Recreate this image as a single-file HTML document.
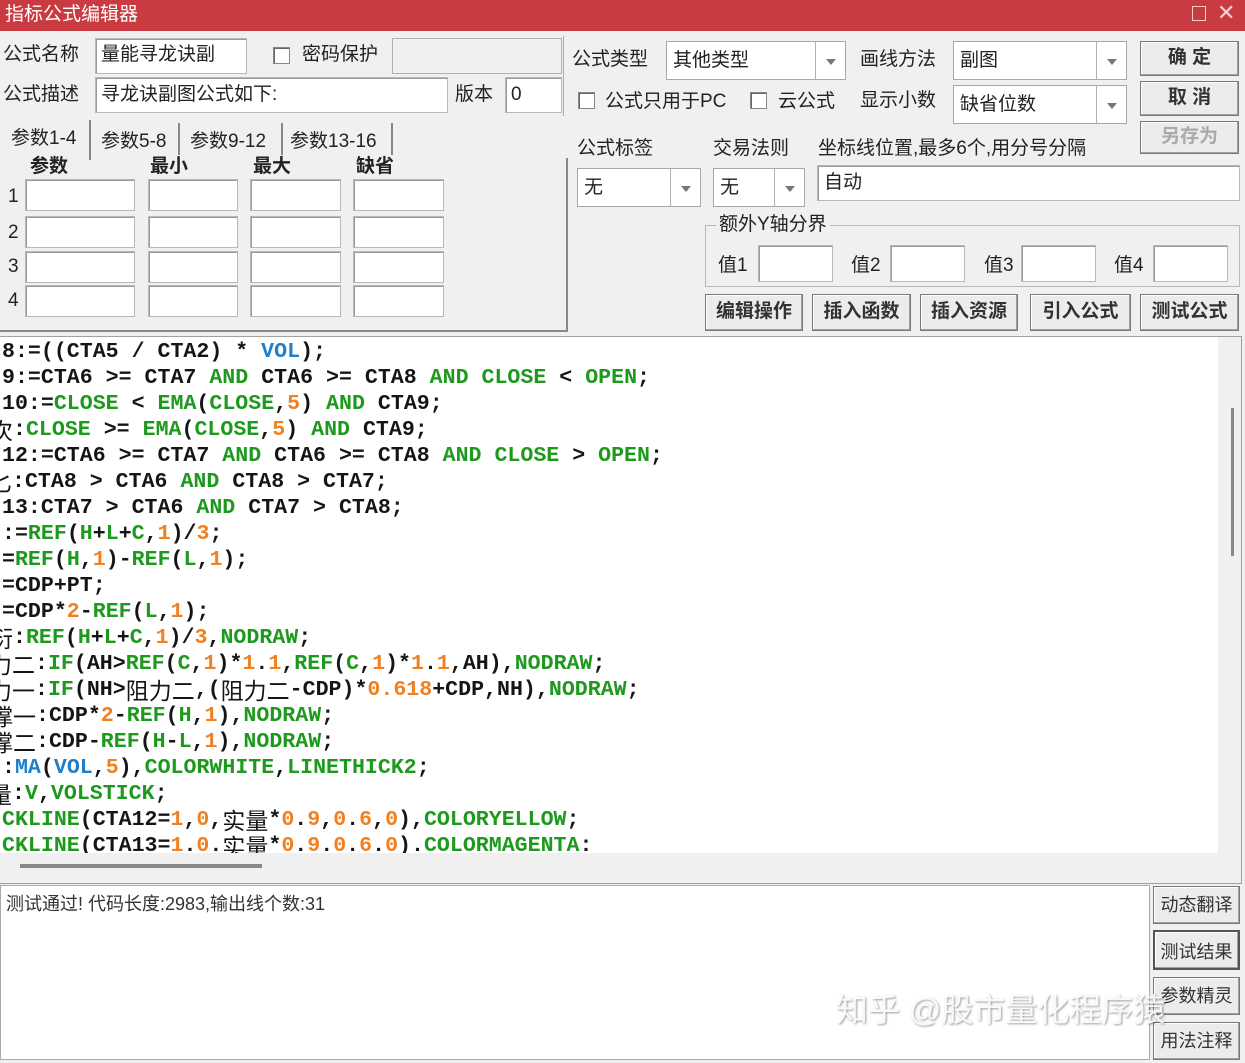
<!DOCTYPE html>
<html><head><meta charset="utf-8"><style>
*{box-sizing:border-box;margin:0;padding:0}
body{width:1245px;height:1063px;background:#f0f0f0;position:relative;overflow:hidden;font-family:"Liberation Sans","Noto Sans CJK SC",sans-serif;font-size:19px;color:#222}
.a{position:absolute}
.t{position:absolute;white-space:nowrap;line-height:1}
.in{position:absolute;background:#fff;border:1px solid #b8b8b8;box-shadow:inset 1px 1px 0 #9a9a9a}
.cb{position:absolute;width:17px;height:17px;background:#fff;border:1px solid #888;box-shadow:inset 1px 1px 0 #666}
.dd{position:absolute;background:#fff;border:1px solid #a8a8a8}
.dd .ar{position:absolute;right:0;top:0;bottom:0;width:30px;border-left:1px solid #b0b0b0}
.dd .ar:after{content:"";position:absolute;left:10px;top:50%;margin-top:-2px;border-left:5px solid transparent;border-right:5px solid transparent;border-top:6px solid #777}
.btn{position:absolute;background:#ececec;border:1px solid #7a7a7a;box-shadow:inset -1px -1px 0 #a0a0a0,inset 1px 1px 0 #fff;text-align:center;font-size:19px;font-weight:bold;color:#333}
#code{position:absolute;left:0;top:337px;width:1218px;height:516px;background:#fff;overflow:hidden;font-family:"Liberation Mono","Noto Sans CJK SC",monospace;font-weight:bold;font-size:21.6px;line-height:26px;color:#151515;white-space:pre;padding-left:2px;padding-top:2px}
#code div{height:26px;line-height:26px}
.g{color:#1d9a1d}.o{color:#f08020}.b{color:#1f7fc9}
.cj{font-family:"Noto Sans CJK SC",sans-serif;font-weight:normal;line-height:1;display:inline-block;vertical-align:top;margin-top:1px;font-size:23px}
</style></head><body>
<div class="a" style="left:0;top:0;width:1245px;height:31px;background:#c93b40"></div>
<div class="t" style="left:5px;top:5px;color:#fff;font-size:19px">指标公式编辑器</div>
<div class="a" style="left:1192px;top:6px;width:14px;height:15px;border:1.5px solid #f3d0d0"></div>
<div class="t" style="left:1217px;top:2px;color:#f3d0d0;font-size:22px">✕</div>

<div class="t" style="left:3px;top:45px">公式名称</div>
<div class="in" style="left:95px;top:38px;width:152px;height:36px"></div>
<div class="t" style="left:101px;top:45px">量能寻龙诀副</div>
<div class="cb" style="left:273px;top:47px"></div>
<div class="t" style="left:302px;top:45px">密码保护</div>
<div class="a" style="left:392px;top:38px;width:170px;height:36px;border:1px solid #b0b0b0"></div>
<div class="t" style="left:3px;top:85px">公式描述</div>
<div class="in" style="left:95px;top:77px;width:353px;height:36px"></div>
<div class="t" style="left:101px;top:85px">寻龙诀副图公式如下:</div>
<div class="t" style="left:455px;top:85px">版本</div>
<div class="in" style="left:505px;top:77px;width:57px;height:36px"></div>
<div class="t" style="left:511px;top:85px">0</div>
<div class="a" style="left:563px;top:36px;width:2px;height:80px;border-left:1px solid #aaa"></div>

<div class="a" style="left:2px;top:120px;width:89px;height:40px;background:#f0f0f0;border-right:2px solid #888"></div>
<div class="t" style="left:11px;top:129px">参数1-4</div>
<div class="t" style="left:101px;top:132px">参数5-8</div><div class="a" style="left:178px;top:123px;width:2px;height:32px;background:#888"></div>
<div class="t" style="left:190px;top:132px">参数9-12</div><div class="a" style="left:281px;top:123px;width:2px;height:32px;background:#888"></div>
<div class="t" style="left:290px;top:132px">参数13-16</div><div class="a" style="left:391px;top:123px;width:2px;height:32px;background:#888"></div>
<div class="a" style="left:0;top:158px;width:568px;height:174px;border-right:2px solid #888;border-bottom:2px solid #888"></div>
<div class="t" style="left:30px;top:157px;font-weight:bold">参数</div>
<div class="t" style="left:150px;top:157px;font-weight:bold">最小</div>
<div class="t" style="left:253px;top:157px;font-weight:bold">最大</div>
<div class="t" style="left:356px;top:157px;font-weight:bold">缺省</div>
<div class="t" style="left:8px;top:187px">1</div><div class="t" style="left:8px;top:223px">2</div><div class="t" style="left:8px;top:257px">3</div><div class="t" style="left:8px;top:291px">4</div>
<div class="in" style="left:25px;top:179px;width:110px;height:32px"></div><div class="in" style="left:148px;top:179px;width:90px;height:32px"></div><div class="in" style="left:250px;top:179px;width:91px;height:32px"></div><div class="in" style="left:353px;top:179px;width:91px;height:32px"></div>
<div class="in" style="left:25px;top:216px;width:110px;height:32px"></div><div class="in" style="left:148px;top:216px;width:90px;height:32px"></div><div class="in" style="left:250px;top:216px;width:91px;height:32px"></div><div class="in" style="left:353px;top:216px;width:91px;height:32px"></div>
<div class="in" style="left:25px;top:251px;width:110px;height:32px"></div><div class="in" style="left:148px;top:251px;width:90px;height:32px"></div><div class="in" style="left:250px;top:251px;width:91px;height:32px"></div><div class="in" style="left:353px;top:251px;width:91px;height:32px"></div>
<div class="in" style="left:25px;top:285px;width:110px;height:32px"></div><div class="in" style="left:148px;top:285px;width:90px;height:32px"></div><div class="in" style="left:250px;top:285px;width:91px;height:32px"></div><div class="in" style="left:353px;top:285px;width:91px;height:32px"></div>

<div class="t" style="left:572px;top:50px">公式类型</div>
<div class="dd" style="left:666px;top:41px;width:180px;height:39px"><div class="ar"></div></div>
<div class="t" style="left:673px;top:51px">其他类型</div>
<div class="t" style="left:860px;top:50px">画线方法</div>
<div class="dd" style="left:953px;top:41px;width:174px;height:39px"><div class="ar"></div></div>
<div class="t" style="left:960px;top:51px">副图</div>
<div class="cb" style="left:578px;top:92px"></div><div class="t" style="left:605px;top:92px">公式只用于PC</div>
<div class="cb" style="left:750px;top:92px"></div><div class="t" style="left:778px;top:92px">云公式</div>
<div class="t" style="left:860px;top:91px">显示小数</div>
<div class="dd" style="left:953px;top:85px;width:174px;height:39px"><div class="ar"></div></div>
<div class="t" style="left:960px;top:95px">缺省位数</div>
<div class="btn" style="left:1140px;top:41px;width:99px;height:35px;line-height:32px">确 定</div>
<div class="btn" style="left:1140px;top:81px;width:99px;height:35px;line-height:32px">取 消</div>
<div class="btn" style="left:1140px;top:121px;width:99px;height:33px;line-height:30px;color:#aaa">另存为</div>

<div class="t" style="left:577px;top:139px">公式标签</div>
<div class="t" style="left:713px;top:139px">交易法则</div>
<div class="t" style="left:818px;top:139px">坐标线位置,最多6个,用分号分隔</div>
<div class="dd" style="left:577px;top:168px;width:124px;height:39px"><div class="ar"></div></div><div class="t" style="left:584px;top:178px">无</div>
<div class="dd" style="left:713px;top:168px;width:92px;height:39px"><div class="ar"></div></div><div class="t" style="left:720px;top:178px">无</div>
<div class="in" style="left:817px;top:165px;width:423px;height:36px"></div><div class="t" style="left:824px;top:173px">自动</div>
<div class="a" style="left:705px;top:225px;width:535px;height:62px;border:1px solid #b8b8b8"></div>
<div class="t" style="left:716px;top:215px;background:#f0f0f0;padding:0 3px">额外Y轴分界</div>
<div class="t" style="left:718px;top:256px">值1</div><div class="in" style="left:758px;top:245px;width:75px;height:37px"></div>
<div class="t" style="left:851px;top:256px">值2</div><div class="in" style="left:890px;top:245px;width:75px;height:37px"></div>
<div class="t" style="left:984px;top:256px">值3</div><div class="in" style="left:1021px;top:245px;width:75px;height:37px"></div>
<div class="t" style="left:1114px;top:256px">值4</div><div class="in" style="left:1153px;top:245px;width:75px;height:37px"></div>
<div class="btn" style="left:705px;top:294px;width:98px;height:37px;line-height:34px">编辑操作</div>
<div class="btn" style="left:812px;top:294px;width:99px;height:37px;line-height:34px">插入函数</div>
<div class="btn" style="left:920px;top:294px;width:98px;height:37px;line-height:34px">插入资源</div>
<div class="btn" style="left:1030px;top:294px;width:101px;height:37px;line-height:34px">引入公式</div>
<div class="btn" style="left:1140px;top:294px;width:99px;height:37px;line-height:34px">测试公式</div>

<div class="a" style="left:0;top:336px;width:1242px;height:548px;border:1px solid #a0a0a0;border-left:none"></div>
<div id="code"><div>8:=((CTA5 / CTA2) * <span class="b">VOL</span>);</div><div>9:=CTA6 &gt;= CTA7 <span class="g">AND</span> CTA6 &gt;= CTA8 <span class="g">AND CLOSE</span> &lt; <span class="g">OPEN</span>;</div><div>10:=<span class="g">CLOSE</span> &lt; <span class="g">EMA</span>(<span class="g">CLOSE</span>,<span class="o">5</span>) <span class="g">AND</span> CTA9;</div><div><span class="cj" style="margin-left:-12px">次</span>:<span class="g">CLOSE</span> &gt;= <span class="g">EMA</span>(<span class="g">CLOSE</span>,<span class="o">5</span>) <span class="g">AND</span> CTA9;</div><div>12:=CTA6 &gt;= CTA7 <span class="g">AND</span> CTA6 &gt;= CTA8 <span class="g">AND CLOSE</span> &gt; <span class="g">OPEN</span>;</div><div><span class="cj" style="margin-left:-13px">匕</span>:CTA8 &gt; CTA6 <span class="g">AND</span> CTA8 &gt; CTA7;</div><div>13:CTA7 &gt; CTA6 <span class="g">AND</span> CTA7 &gt; CTA8;</div><div>:=<span class="g">REF</span>(<span class="g">H</span>+<span class="g">L</span>+<span class="g">C</span>,<span class="o">1</span>)/<span class="o">3</span>;</div><div>=<span class="g">REF</span>(<span class="g">H</span>,<span class="o">1</span>)-<span class="g">REF</span>(<span class="g">L</span>,<span class="o">1</span>);</div><div>=CDP+PT;</div><div>=CDP*<span class="o">2</span>-<span class="g">REF</span>(<span class="g">L</span>,<span class="o">1</span>);</div><div><span class="cj" style="margin-left:-12px">衍</span>:<span class="g">REF</span>(<span class="g">H</span>+<span class="g">L</span>+<span class="g">C</span>,<span class="o">1</span>)/<span class="o">3</span>,<span class="g">NODRAW</span>;</div><div><span class="cj" style="margin-left:-13px">力二</span>:<span class="g">IF</span>(AH&gt;<span class="g">REF</span>(<span class="g">C</span>,<span class="o">1</span>)*<span class="o">1</span>.<span class="o">1</span>,<span class="g">REF</span>(<span class="g">C</span>,<span class="o">1</span>)*<span class="o">1</span>.<span class="o">1</span>,AH),<span class="g">NODRAW</span>;</div><div><span class="cj" style="margin-left:-13px">力一</span>:<span class="g">IF</span>(NH&gt;<span class="cj">阻力二</span>,(<span class="cj">阻力二</span>-CDP)*<span class="o">0.618</span>+CDP,NH),<span class="g">NODRAW</span>;</div><div><span class="cj" style="margin-left:-12px">撑一</span>:CDP*<span class="o">2</span>-<span class="g">REF</span>(<span class="g">H</span>,<span class="o">1</span>),<span class="g">NODRAW</span>;</div><div><span class="cj" style="margin-left:-12px">撑二</span>:CDP-<span class="g">REF</span>(<span class="g">H</span>-<span class="g">L</span>,<span class="o">1</span>),<span class="g">NODRAW</span>;</div><div>:<span class="b">MA</span>(<span class="b">VOL</span>,<span class="o">5</span>),<span class="g">COLORWHITE</span>,<span class="g">LINETHICK2</span>;</div><div><span class="cj" style="margin-left:-13px">量</span>:<span class="g">V</span>,<span class="g">VOLSTICK</span>;</div><div><span class="g">CKLINE</span>(CTA12=<span class="o">1</span>,<span class="o">0</span>,<span class="cj">实量</span>*<span class="o">0</span>.<span class="o">9</span>,<span class="o">0</span>.<span class="o">6</span>,<span class="o">0</span>),<span class="g">COLORYELLOW</span>;</div><div><span class="g">CKLINE</span>(CTA13=<span class="o">1</span>.<span class="o">0</span>.<span class="cj">实量</span>*<span class="o">0</span>.<span class="o">9</span>.<span class="o">0</span>.<span class="o">6</span>.<span class="o">0</span>).<span class="g">COLORMAGENTA</span>:</div></div>
<div class="a" style="left:1231px;top:408px;width:3px;height:148px;background:#888"></div>
<div class="a" style="left:20px;top:864px;width:242px;height:4px;background:#888"></div>

<div class="a" style="left:0;top:885px;width:1150px;height:175px;background:#fff;border:1px solid #aaa"></div>
<div class="t" style="left:6px;top:895px;font-size:18px;color:#333">测试通过! 代码长度:2983,输出线个数:31</div>
<div class="btn" style="left:1153px;top:886px;width:87px;height:38px;line-height:36px;font-weight:normal;font-size:18px">动态翻译</div>
<div class="btn" style="left:1153px;top:930px;width:87px;height:40px;line-height:40px;font-weight:normal;font-size:18px;border:2px solid #555">测试结果</div>
<div class="btn" style="left:1153px;top:977px;width:87px;height:38px;line-height:36px;font-weight:normal;font-size:18px">参数精灵</div>
<div class="btn" style="left:1153px;top:1022px;width:87px;height:38px;line-height:36px;font-weight:normal;font-size:18px">用法注释</div>
<div class="t" style="left:836px;top:994px;font-size:32px;color:rgba(255,255,255,0.9);text-shadow:1px 1px 2px rgba(0,0,0,0.4)">知乎 @股市量化程序猿</div>
</body></html>
